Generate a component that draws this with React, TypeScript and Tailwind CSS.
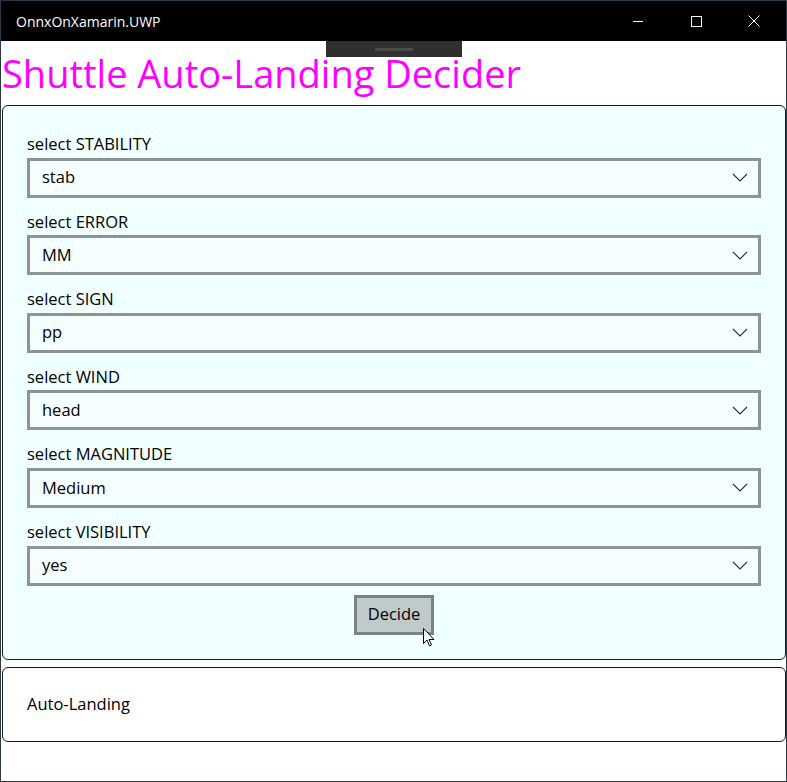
import React from "react";

const font = { fontFamily: '"Open Sans", "Noto Sans", sans-serif' };

const pickers = [
  { label: "select STABILITY", value: "stab" },
  { label: "select ERROR", value: "MM" },
  { label: "select SIGN", value: "pp" },
  { label: "select WIND", value: "head" },
  { label: "select MAGNITUDE", value: "Medium" },
  { label: "select VISIBILITY", value: "yes" },
];

const Chevron = () => (
  <svg width="16" height="9" viewBox="0 0 16 9" fill="none">
    <path d="M1 1l7 7 7-7" stroke="#333" strokeWidth="1.2" />
  </svg>
);

const App = () => {
  return (
    <div
      className="w-[787px] h-[782px] border border-[#2b3a4a] bg-white flex flex-col overflow-hidden"
      style={font}
    >
      <div className="h-10 bg-black flex items-center text-white shrink-0">
        <span className="pl-[15px] text-[14px] flex-1">OnnxOnXamarin.UWP</span>
        <div className="w-[46px] flex justify-center">
          <div className="w-[10px] h-px bg-white" />
        </div>
        <div className="w-[46px] ml-[12px] flex justify-center">
          <div className="w-[11px] h-[11px] border border-white" />
        </div>
        <div className="w-[46px] ml-[12px] mr-[9px] flex justify-center">
          <svg width="12" height="12" viewBox="0 0 12 12">
            <path d="M0.5 0.5l11 11M11.5 0.5l-11 11" stroke="white" strokeWidth="1" />
          </svg>
        </div>
      </div>

      <div className="relative flex-1">
        <div className="absolute left-[325px] top-0 w-[136px] h-4 bg-[#2f2f2f] flex items-center justify-center">
          <div className="w-[38px] h-[3px] bg-[#4a4a4a]" />
        </div>

        <h1 className="text-[#ff00ff] text-[38px] leading-[64px] pl-px h-16">
          Shuttle Auto-Landing Decider
        </h1>

        <div className="ml-px border border-[#1a1a1a] rounded-md bg-[#f0ffff] px-6 pt-[14px] pb-[24px] flex flex-col">
          {pickers.map((p) => (
            <div key={p.label} className="flex flex-col">
              <span className="pt-[13px] leading-[22px] mb-[2.6px] text-[16.5px] text-black">
                {p.label}
              </span>
              <div className="h-10 border-[3px] border-[#8c9595] bg-[#f5ffff] flex items-center justify-between pl-3 pr-[10px]">
                <span className="text-[16.5px] text-black">{p.value}</span>
                <Chevron />
              </div>
            </div>
          ))}
          <div className="flex justify-center mt-[9px]">
            <div className="relative w-20 h-10 border-[3px] border-[#798383] bg-[#c1caca] flex items-center justify-center text-[16.5px] text-black">
              Decide
              <svg
                className="absolute left-[66px] top-[30px]"
                width="12"
                height="19"
                viewBox="0 0 12 19"
              >
                <path
                  d="M0.5 0.5v15l3.5-3.5 2.5 6 2-1-2.5-5.5h5z"
                  fill="white"
                  stroke="black"
                  strokeWidth="1"
                />
              </svg>
            </div>
          </div>
        </div>

        <div className="ml-px mt-[7px] border border-[#1a1a1a] rounded-md bg-white h-[75px] flex items-center px-6">
          <span className="text-[16.5px] text-black">Auto-Landing</span>
        </div>
      </div>
    </div>
  );
};

export default App;
